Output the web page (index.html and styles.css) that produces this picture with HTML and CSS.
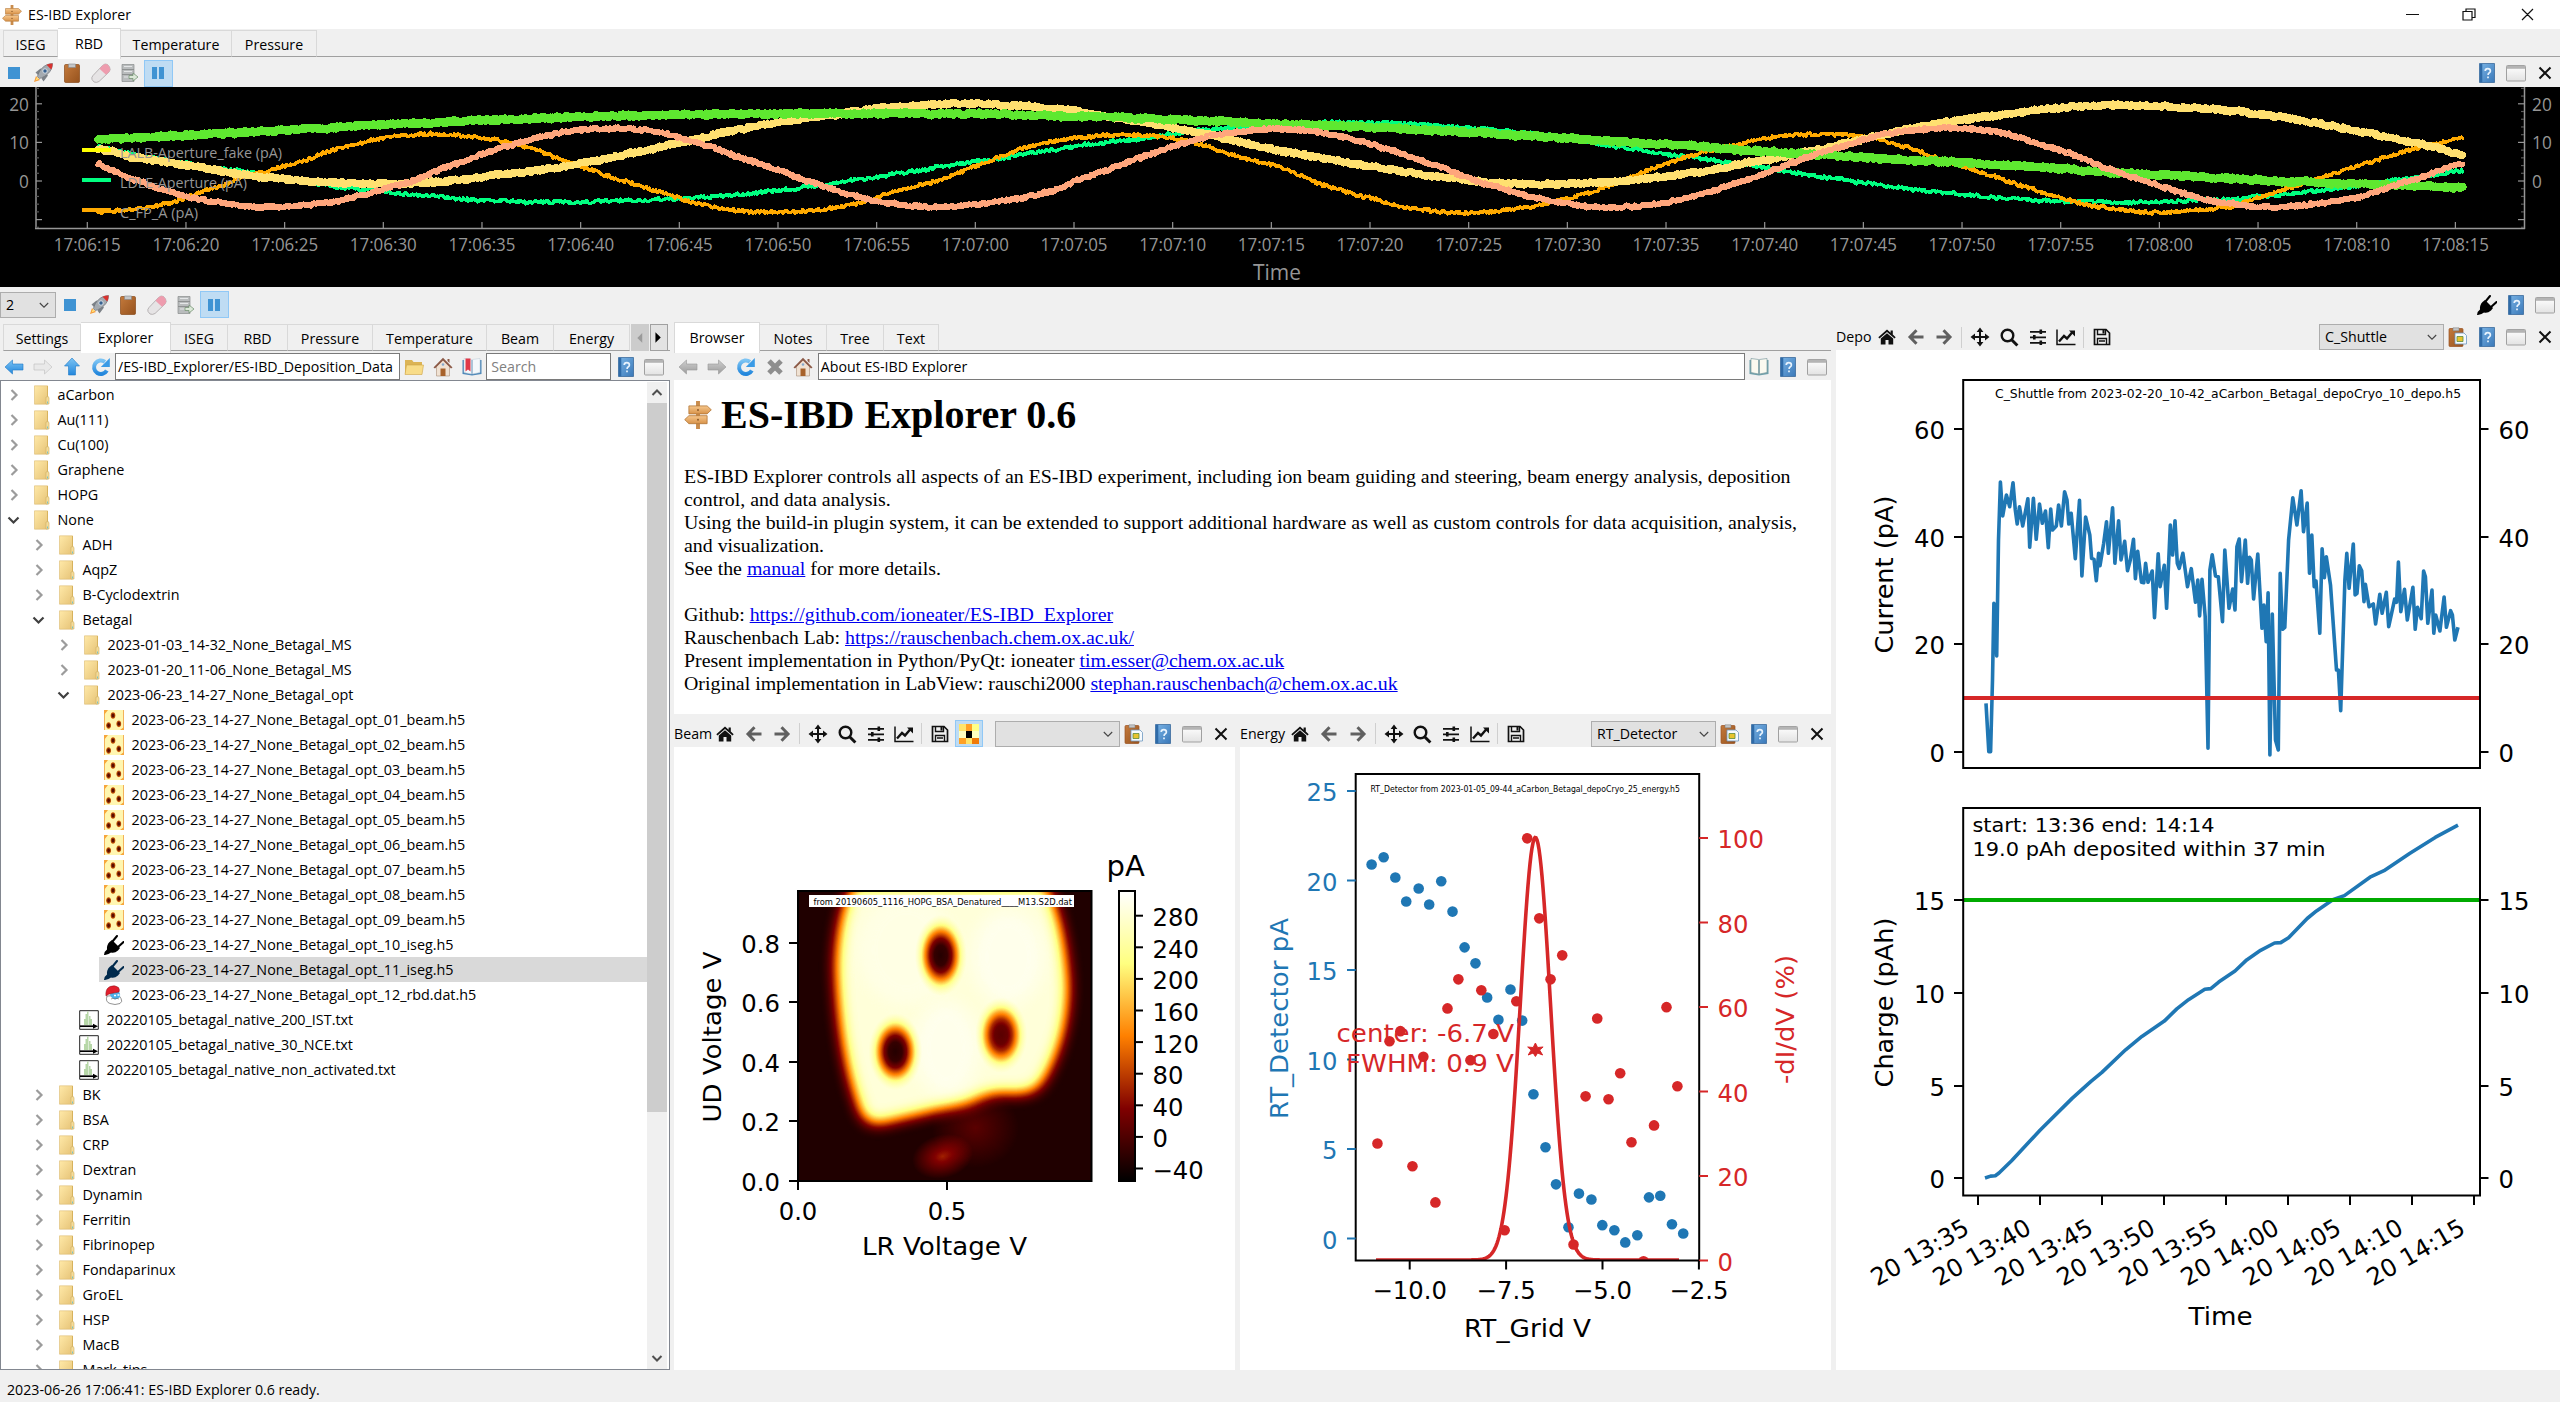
FILE: index.html
```html
<!DOCTYPE html>
<html lang="en">
<head>
<meta charset="utf-8">
<title>ES-IBD Explorer</title>
<link rel="stylesheet" href="styles.css">
</head>
<body>
<svg class="sprite" aria-hidden="true">
  <defs>
    <linearGradient id="gBlue" x1="0" y1="0" x2="0" y2="1"><stop offset="0" stop-color="#7cc4f4"/><stop offset="1" stop-color="#2387dc"/></linearGradient>
    <linearGradient id="gGrey" x1="0" y1="0" x2="0" y2="1"><stop offset="0" stop-color="#cfcfcf"/><stop offset="1" stop-color="#9c9c9c"/></linearGradient>
    <linearGradient id="gFolder" x1="0" y1="0" x2="1" y2="1"><stop offset="0" stop-color="#ffe9a8"/><stop offset="1" stop-color="#e6c377"/></linearGradient>
    <linearGradient id="gWood" x1="0" y1="0" x2="0" y2="1"><stop offset="0" stop-color="#f7c78c"/><stop offset="1" stop-color="#d8934a"/></linearGradient>
    <linearGradient id="gBook" x1="0" y1="0" x2="1" y2="1"><stop offset="0" stop-color="#7ab4e6"/><stop offset="1" stop-color="#3a78b8"/></linearGradient>
    <linearGradient id="gWin" x1="0" y1="0" x2="0" y2="1"><stop offset="0" stop-color="#fff"/><stop offset="1" stop-color="#e2e2e2"/></linearGradient>
    <linearGradient id="gClip" x1="0" y1="0" x2="1" y2="1"><stop offset="0" stop-color="#c47a3c"/><stop offset="1" stop-color="#96521d"/></linearGradient>
    <radialGradient id="gDot"><stop offset="0.3" stop-color="#5a0c00"/><stop offset="0.7" stop-color="#c85a10"/><stop offset="1" stop-color="#ffd860" stop-opacity="0"/></radialGradient>
  </defs>
  <symbol id="sign" viewBox="0 0 20 20"><path d="M8.6 0h2.800v20H8.600z" fill="#c98c4c"/><path d="M3.500 3.500h13l3 2.800-3 2.900h-13z" fill="url(#gWood)" stroke="#b57a3c" stroke-width=".6"/><path d="M16.500 10.500h-13l-3 2.800 3 2.900h13z" fill="url(#gWood)" stroke="#b57a3c" stroke-width=".6"/><circle cx="10" cy="6.400" r=".7" fill="#8d5a28"/><circle cx="10" cy="13.400" r=".7" fill="#8d5a28"/></symbol>
  <symbol id="stop" viewBox="0 0 20 20"><path d="M4 4h12v12H4z" fill="#3f93d3"/></symbol>
  <symbol id="pause" viewBox="0 0 20 20"><path d="M4 4h5v12H4zM11 4h5v12h-5z" fill="#3f93d3"/></symbol>
  <symbol id="rocket" viewBox="0 0 20 20"><path d="M1 19l2-6 4 4z" fill="#f59a3a"/><path d="M2.500 17.500l1.500-3.500 2 2z" fill="#ffe27a"/><path d="M2.500 9.500l5-4 4 3-5 5zM8.500 15.500l4-5 2.500 2-4.500 6z" fill="#7d8288"/><path d="M4.500 13.500C6 7 11 1 19.500.500c0 8-6.500 13-13 15z" fill="#a4aab0" stroke="#6d737a" stroke-width=".7"/><path d="M13.500 1.800c2-.9 4-1.300 6-1.300 0 2.500-.4 4.500-1.300 6z" fill="#d8322f"/><circle cx="12" cy="8" r="2.200" fill="#38618f" stroke="#e8edf2" stroke-width=".8"/></symbol>
  <symbol id="clip" viewBox="0 0 20 20"><rect x="2.500" y="1.500" width="15" height="18" rx="1.200" fill="url(#gClip)" stroke="#8a4a1a" stroke-width=".7"/><path d="M6.500 1h7v3.500h-7z" fill="#c4c6c8" stroke="#85878a" stroke-width=".6"/></symbol>
  <symbol id="eraser" viewBox="0 0 20 20"><path d="M2 12.500L11.500 2.500Q14 0 16.500 1.500l2 2.500q1.500 2.500-.5 5L8 18.500q-2.500 1.500-5 .5L1 16.500q-.8-2 1-4z" fill="#e6e4e5" stroke="#a9a4a6" stroke-width=".8"/><path d="M8.500 5.700L11.500 2.500Q14 0 16.500 1.500l2 2.500q1.500 2.500-.5 5l-3 2.800z" fill="#ee9cae"/></symbol>
  <symbol id="server" viewBox="0 0 20 20"><g fill="#b9bcbd" stroke="#8a8c8d" stroke-width=".7"><path d="M3 1.500h12v5H3zM3 6.500h12v5H3zM3 11.500h12v7H3z"/></g><path d="M5 3.500h8M5 8.500h8M5 14h5" stroke="#e4e6e7"/><path d="M10 12.500h4V10l5 4-5 4v-2.500h-4z" fill="#dbe8d8" stroke="#6c8d6a" stroke-width=".7"/></symbol>
  <symbol id="left" viewBox="0 0 20 20"><path d="M1 10l7.500-7v4H19v6H8.500v4z" stroke-width=".6" stroke-linejoin="round"/></symbol>
  <symbol id="right" viewBox="0 0 20 20"><path d="M19 10l-7.500-7v4H1v6h10.500v4z" stroke-width=".6" stroke-linejoin="round"/></symbol>
  <symbol id="up" viewBox="0 0 20 20"><path d="M10 1L2.500 9h4v9h7V9h4z" fill="url(#gBlue)" stroke="#1f7bc8" stroke-width=".6"/></symbol>
  <symbol id="reload" viewBox="0 0 20 20"><path d="M15.800 13.500A6.800 6.800 0 1 1 14 4.800" fill="none" stroke="url(#gBlue)" stroke-width="4"/><path d="M18.800 1v9H9.800z" fill="#3a9be6"/></symbol>
  <symbol id="folderopen" viewBox="0 0 20 20"><path d="M1 3h7l1.500 2H18v12H1z" fill="#dcb455"/><path d="M2.500 8H19.500L18 17.500H1z" fill="#f8dc88" stroke="#cfa548" stroke-width=".6"/></symbol>
  <symbol id="house" viewBox="0 0 20 20"><path d="M3.500 9.500L10 3l6.500 6.500V19h-13z" fill="#f0e2d3" stroke="#a98d77" stroke-width=".6"/><path d="M.5 10.500L10 .8l9.500 9.700-1.500 1L10 3.500l-8 8z" fill="#8c5a47"/><path d="M7.500 11.500h5V19h-5z" fill="#a8622a"/><circle cx="10" cy="7.500" r="1.300" fill="#86a9cc"/><path d="M14.500 2h2v4l-2-2z" fill="#8c5a47"/></symbol>
  <symbol id="bookmark" viewBox="0 0 20 20"><path d="M.5 3v14l9.500 1.500L19.500 17V3z" fill="#4d87b8"/><path d="M2 1.500l7.500 1V17L2 15.500zM18 1.500l-7.500 1V17l7.500-1.500z" fill="#f4f8fb" stroke="#b9c9d6" stroke-width=".5"/><path d="M3.500 1.500h5V14.500l-2.500-2-2.500 2z" fill="#e03848"/></symbol>
  <symbol id="openbook" viewBox="0 0 20 20"><path d="M.5 3v14l9.500 1.500L19.500 17V3z" fill="#6fa0aa"/><path d="M2 1.500l7.500 1V17L2 15.500zM18 1.500l-7.500 1V17l7.500-1.500z" fill="#fbfaf0" stroke="#7d9ba1" stroke-width=".7"/></symbol>
  <symbol id="help" viewBox="0 0 20 20"><path d="M2.500 .5h15v19h-15z" fill="url(#gBook)" stroke="#2c5f94" stroke-width=".7"/><path d="M2.800 .8h2.500v18.500H2.800z" fill="#2f6ba8"/><path d="M8.200 8q.1-2.400 2.600-2.400T13.400 8q0 1.300-1.300 2-1 .6-1 2M11 13.500v1.700" fill="none" stroke="#e8f3fd" stroke-width="1.700"/></symbol>
  <symbol id="window" viewBox="0 0 20 20"><rect x=".5" y="2.500" width="19" height="15.500" rx="1" fill="url(#gWin)" stroke="#a0a0a0"/><path d="M.8 2.800h18.400v3H.8z" fill="#b4b4b4"/></symbol>
  <symbol id="close" viewBox="0 0 20 20"><path d="M4.500 4.500l11 11M15.500 4.500l-11 11" stroke="#111" stroke-width="2"/></symbol>
  <symbol id="greyx" viewBox="0 0 20 20"><path d="M4 4l12 12M16 4L4 16" stroke="#8e8e8e" stroke-width="5"/></symbol>
  <symbol id="home" viewBox="0 0 20 20"><path d="M10 2.500L1.300 10.200l1.200 1.300L10 5l7.500 6.500 1.200-1.300-2.900-2.600V3.500h-2.200v2.200z" fill="#111"/><path d="M10 6.200L3.800 11.600V17.500h4.700v-4.500h3v4.500h4.700v-5.900z" fill="#111"/></symbol>
  <symbol id="mleft" viewBox="0 0 20 20"><path d="M17.500 10H4M10.500 3.300L4 10l6.500 6.700" fill="none" stroke="#606060" stroke-width="3"/></symbol>
  <symbol id="mright" viewBox="0 0 20 20"><path d="M2.500 10H16M9.500 3.300L16 10l-6.500 6.700" fill="none" stroke="#606060" stroke-width="3"/></symbol>
  <symbol id="move" viewBox="0 0 20 20"><path d="M10 2v16M2 10h16" stroke="#111" stroke-width="2"/><path d="M10 .500l3.400 4.500H6.600zM10 19.500l3.400-4.500H6.600zM.500 10l4.500-3.400v6.800zM19.500 10l-4.500-3.400v6.800z" fill="#111"/></symbol>
  <symbol id="lens" viewBox="0 0 20 20"><circle cx="8.500" cy="8.500" r="5.800" fill="none" stroke="#111" stroke-width="2.400"/><path d="M12.600 12.700l5.800 5.800" stroke="#111" stroke-width="3"/></symbol>
  <symbol id="sliders" viewBox="0 0 20 20"><path d="M2 4.800h16M2 10.300h16M2 15.800h16" stroke="#111" stroke-width="1.700"/><path d="M11.500 2.500h2.600v4.600h-2.600zM5 8h2.600v4.600H5zM11.500 13.500h2.600v4.600h-2.600z" fill="#111"/></symbol>
  <symbol id="trend" viewBox="0 0 20 20"><path d="M1 2.500v15h18.500" fill="none" stroke="#111" stroke-width="1.500"/><path d="M3 14.500l5-5.500 3 2.500 5.500-6.500" fill="none" stroke="#111" stroke-width="2.400"/><path d="M13 3.500h6v6z" fill="#111"/></symbol>
  <symbol id="save" viewBox="0 0 20 20"><path d="M2.500 2.500h11.500L17.500 6V17.500h-15z" fill="none" stroke="#111" stroke-width="1.700"/><path d="M5.500 2.500v5h8v-5M5.500 17.500v-6h9v6M7 14h6" fill="none" stroke="#111" stroke-width="1.400"/><path d="M10.500 3h2v3.500h-2z" fill="#111"/></symbol>
  <symbol id="pixels" viewBox="0 0 20 20"><path d="M0 0h7v7H0z" fill="#ffe46a"/><path d="M7 0h6v7H7z" fill="#ffa126"/><path d="M13 0h7v7h-7z" fill="#ffff86"/><path d="M0 7h7v7H0zM13 7h7v7h-7z" fill="#ffffc0"/><path d="M7 7h6v7H7z"/><path d="M0 14h7v6H0z" fill="#ffa126"/><path d="M7 14h6v6H7z" fill="#ffe46a"/><path d="M13 14h7v6h-7z" fill="#f07a08"/></symbol>
  <symbol id="paste" viewBox="0 0 20 20"><rect x="1" y="1.500" width="14" height="18" rx="1" fill="url(#gClip)" stroke="#9a5020" stroke-width=".7"/><path d="M5 .8h6v3H5z" fill="#c4c6c8" stroke="#777" stroke-width=".5"/><path d="M7 6h9l2.500 2.500V17H7z" fill="#f6fafd" stroke="#6c98c0" stroke-width=".8"/><path d="M9 9.500h6v5H9z" fill="#e8c42e" stroke="#5d8a3a" stroke-width=".8"/></symbol>
  <symbol id="plug" viewBox="0 0 20 20"><path d="M0 20q.5-4 3-5.500-.5-4.500 2.500-7.500l2.500-2 8 8-2 2.500q-3.500 3-7 2Q5 19 1 20z"/><path d="M8.500 6.500l4.500-5.500M14 12l5.500-5" stroke="currentColor" stroke-width="2" stroke-linecap="round"/></symbol>
  <symbol id="folder" viewBox="0 0 16 20"><path d="M.5.800h13v18.400H.5z" fill="url(#gFolder)" stroke="#dcbb70" stroke-width=".6"/><path d="M13.500 1v17" stroke="#d7b25c" stroke-width="1"/><path d="M12 12q3-1.500 3 1v6h-3z" fill="#f5dc9a" stroke="#cfae62" stroke-width=".6"/><path d="M13.500 16.500v2" stroke="#79c3c4"/></symbol>
  <symbol id="beamfile" viewBox="0 0 20 20"><path d="M0 0h20v20H0z" fill="#fff6b0"/><path d="M0 0h1v20H0zM19 0h1v20h-1z" fill="#f3b25a"/><path d="M0 0h4L0 5zM16 20h4v-3z" fill="#f7a63c"/><ellipse cx="9" cy="5.500" rx="3" ry="4" fill="url(#gDot)"/><ellipse cx="4.600" cy="15.500" rx="3" ry="4" fill="url(#gDot)"/><ellipse cx="14.800" cy="13.800" rx="3" ry="4" fill="url(#gDot)"/></symbol>
  <symbol id="smurf" viewBox="0 0 20 20"><path d="M3 11Q1 17 6 18.500q5 2 10 0 3-2 1-5l-2-3z" fill="#fff" stroke="#666" stroke-width=".7"/><path d="M6 8.500l9-2q2 3 1 5.500-3 3-6 2-4-2-4-5.500z" fill="#4fb0e8"/><path d="M7 14q2-1.500 4 0 2-1.500 4 0" fill="none" stroke="#666" stroke-width=".6"/><path d="M2 11Q1 4 6 1.500q5-2 8.500 1 1.500 2.500.5 4.500L7 8.500Q4 9 2 11z" fill="#e21f2c" stroke="#8b1018" stroke-width=".5"/><path d="M10 10.500h2M13.500 10h2" stroke="#fff" stroke-width="1.700"/></symbol>
  <symbol id="msfile" viewBox="0 0 20 20"><path d="M.7.700h18.600v18.600H.7z" fill="#fff" stroke="#222"/><path d="M5 15V9h1.500V4H8V1.500h1.500V15zM10 15V6h1.500v3H13v6z" fill="#b7d7a8"/><path d="M1 16.200h14" stroke="#000" stroke-width="1.700"/><path d="M14 13.700l5 2.500-5 2.500z"/></symbol>
  <symbol id="chev" viewBox="0 0 20 20"><path d="M7.500 5l5 5-5 5" fill="none" stroke="#9c9c9c" stroke-width="2.200"/></symbol>
  <symbol id="chevdown" viewBox="0 0 20 20"><path d="M4.500 7.500l5 5 5-5" fill="none" stroke="#404040" stroke-width="2.200"/></symbol>
  <symbol id="caret" viewBox="0 0 10 10"><path d="M.8 3l4.200 4.200L9.200 3" fill="none" stroke="#444" stroke-width="1.100"/></symbol>
</svg>

<header class="titlebar">
  <svg class="ic"><use href="#sign"/></svg><span>ES-IBD Explorer</span>
  <svg class="winctl" viewBox="0 0 150 29"><path d="M6 14.500h13M63 11.500h9v8.500h-9zM66 11.500V9h9v8.500h-3M122 9l11 11M133 9l-11 11" fill="none" stroke="#111" stroke-width="1.200"/></svg>
</header>

<section class="live">
  <nav class="tabs livetabs"><span class="w54">ISEG</span><span class="on w62">RBD</span><span class="w111">Temperature</span><span class="w85">Pressure</span></nav>
  <div class="toolbar livebar">
    <i><svg class="ic"><use href="#stop"/></svg></i><i><svg class="ic"><use href="#rocket"/></svg></i><i><svg class="ic"><use href="#clip"/></svg></i><i><svg class="ic"><use href="#eraser"/></svg></i><i><svg class="ic"><use href="#server"/></svg></i><i class="lit"><svg class="ic"><use href="#pause"/></svg></i>
    <b class="grow"></b>
    <i><svg class="ic"><use href="#help"/></svg></i><i><svg class="ic"><use href="#window"/></svg></i><i><svg class="ic"><use href="#close"/></svg></i>
  </div>
  <svg id="live" class="liveplot" viewBox="0 87 2560 200"></svg>
</section>

<div class="toolbar mainbar">
  <div class="combo small">2<svg><use href="#caret"/></svg></div>
  <i><svg class="ic"><use href="#stop"/></svg></i><i><svg class="ic"><use href="#rocket"/></svg></i><i><svg class="ic"><use href="#clip"/></svg></i><i><svg class="ic"><use href="#eraser"/></svg></i><i><svg class="ic"><use href="#server"/></svg></i><i class="lit"><svg class="ic"><use href="#pause"/></svg></i>
  <b class="grow"></b>
  <i><svg class="ic"><use href="#plug"/></svg></i><i><svg class="ic"><use href="#help"/></svg></i><i><svg class="ic"><use href="#window"/></svg></i>
</div>

<main>
  <section class="explorer">
    <nav class="tabs"><span class="w78">Settings</span><span class="on w90">Explorer</span><span class="w57">ISEG</span><span class="w60">RBD</span><span class="w85">Pressure</span><span class="w114">Temperature</span><span class="w67">Beam</span><span class="w76">Energy</span><em class="scroll off"><svg viewBox="0 0 18 26"><path d="M11.500 8v11L6 13.500z" fill="#9a9a9a"/></svg></em><em class="scroll"><svg viewBox="0 0 18 26"><path d="M5 7v12l6-6z"/></svg></em></nav>
    <div class="toolbar">
      <i><svg class="ic blue"><use href="#left"/></svg></i><i><svg class="ic pale"><use href="#right"/></svg></i><i><svg class="ic"><use href="#up"/></svg></i><i><svg class="ic"><use href="#reload"/></svg></i>
      <div class="field path">/ES-IBD_Explorer/ES-IBD_Deposition_Data</div>
      <i><svg class="ic"><use href="#folderopen"/></svg></i><i><svg class="ic"><use href="#house"/></svg></i><i><svg class="ic"><use href="#bookmark"/></svg></i>
      <div class="field search">Search</div>
      <i><svg class="ic"><use href="#help"/></svg></i><i><svg class="ic"><use href="#window"/></svg></i>
    </div>
    <div class="treebox">
      <div id="tree" class="tree"></div>
      <div class="vscroll"><svg viewBox="0 0 20 20"><path d="M5.500 12.500L10 8l4.500 4.500" fill="none" stroke="#505050" stroke-width="2"/></svg><div class="thumb"></div><svg viewBox="0 0 20 20"><path d="M5.500 7.500L10 12l4.500-4.500" fill="none" stroke="#505050" stroke-width="2"/></svg></div>
    </div>
  </section>

  <section class="center">
    <nav class="tabs"><span class="on w86">Browser</span><span class="w67">Notes</span><span class="w57">Tree</span><span class="w55">Text</span></nav>
    <div class="toolbar">
      <i><svg class="ic grey"><use href="#left"/></svg></i><i><svg class="ic grey"><use href="#right"/></svg></i><i><svg class="ic"><use href="#reload"/></svg></i><i><svg class="ic"><use href="#greyx"/></svg></i><i><svg class="ic"><use href="#house"/></svg></i>
      <div class="field grow">About ES-IBD Explorer</div>
      <i><svg class="ic"><use href="#openbook"/></svg></i><i><svg class="ic"><use href="#help"/></svg></i><i><svg class="ic"><use href="#window"/></svg></i>
    </div>
    <article class="about">
      <h1><svg><use href="#sign"/></svg>ES-IBD Explorer 0.6</h1>
      <p>ES-IBD Explorer controls all aspects of an ES-IBD experiment, including ion beam guiding and steering, beam energy analysis, deposition<br>control, and data analysis.<br>Using the build-in plugin system, it can be extended to support additional hardware as well as custom controls for data acquisition, analysis,<br>and visualization.<br>See the <a>manual</a> for more details.</p>
      <p>Github: <a>https://github.com/ioneater/ES-IBD_Explorer</a><br>Rauschenbach Lab: <a>https://rauschenbach.chem.ox.ac.uk/</a><br>Present implementation in Python/PyQt: ioneater <a>tim.esser@chem.ox.ac.uk</a><br>Original implementation in LabView: rauschi2000 <a>stephan.rauschenbach@chem.ox.ac.uk</a></p>
    </article>
    <div class="plots">
      <section class="beam">
        <div class="toolbar">
          <label class="w37">Beam</label>
          <i><svg class="ic"><use href="#home"/></svg></i><i><svg class="ic"><use href="#mleft"/></svg></i><i><svg class="ic"><use href="#mright"/></svg></i><s></s><i><svg class="ic"><use href="#move"/></svg></i><i><svg class="ic"><use href="#lens"/></svg></i><i><svg class="ic"><use href="#sliders"/></svg></i><i><svg class="ic"><use href="#trend"/></svg></i><s></s><i><svg class="ic"><use href="#save"/></svg></i><i class="lit"><svg class="ic"><use href="#pixels"/></svg></i>
          <b class="grow"></b>
          <div class="combo"><svg><use href="#caret"/></svg></div>
          <i><svg class="ic"><use href="#paste"/></svg></i><i><svg class="ic"><use href="#help"/></svg></i><i><svg class="ic"><use href="#window"/></svg></i><i><svg class="ic"><use href="#close"/></svg></i>
        </div>
        <svg id="beam" class="plot" viewBox="674 747 561 623">
          <defs>
            <filter id="afmhot" x="0" y="0" width="1" height="1" color-interpolation-filters="sRGB"><feComponentTransfer><feFuncR type="table" tableValues="0 .5 1 1 1"/><feFuncG type="table" tableValues="0 0 .5 1 1"/><feFuncB type="table" tableValues="0 0 0 .5 1"/></feComponentTransfer></filter>
            <filter id="soft" x="-.3" y="-.3" width="1.600" height="1.600" color-interpolation-filters="sRGB"><feGaussianBlur stdDeviation="21"/></filter>
            <radialGradient id="hole"><stop offset="0" stop-color="#121212"/><stop offset=".25" stop-color="#141414" stop-opacity=".97"/><stop offset=".42" stop-color="#1a1a1a" stop-opacity=".82"/><stop offset=".62" stop-color="#222" stop-opacity=".48"/><stop offset=".8" stop-color="#555" stop-opacity=".2"/><stop offset="1" stop-color="#999" stop-opacity="0"/></radialGradient>
            <radialGradient id="smear"><stop offset="0" stop-color="#fff" stop-opacity=".27"/><stop offset="1" stop-color="#fff" stop-opacity="0"/></radialGradient>
            <linearGradient id="bar" x1="0" y1="1" x2="0" y2="0"><stop offset="0" stop-color="#000"/><stop offset=".25" stop-color="#800000"/><stop offset=".5" stop-color="#ff8000"/><stop offset=".75" stop-color="#ffff80"/><stop offset="1" stop-color="#fff"/></linearGradient>
            <clipPath id="frame"><path d="M351 496h810v800H351z"/></clipPath>
          </defs>
          <g transform="translate(670 710) scale(.3635)"><g clip-path="url(#frame)"><g filter="url(#afmhot)">
            <path d="M351 496h810v800H351z" fill="#101010"/>
            <path filter="url(#soft)" d="M505 484C474 540 460 620 458 710c4 140 24 270 58 368 12 42 25 62 62 58 50-10 130-32 240-54 40-20 65-31 100-30 55 3 84 8 112-40C1076 930 1096 840 1094 750 1088 640 1066 550 1034 484z" fill="#ececec"/>
            <ellipse cx="650" cy="660" rx="130" ry="150" fill="#fff" opacity=".35" filter="url(#soft)"/>
            <ellipse cx="930" cy="680" rx="100" ry="130" fill="#fff" opacity=".5" filter="url(#soft)"/>
            <ellipse cx="760" cy="930" rx="90" ry="130" fill="#fff" opacity=".5" filter="url(#soft)"/>
            <ellipse cx="745" cy="675" rx="72" ry="112" fill="url(#hole)"/>
            <ellipse cx="620" cy="940" rx="74" ry="106" fill="url(#hole)"/>
            <ellipse cx="911" cy="894" rx="72" ry="104" fill="url(#hole)" opacity=".88"/>
            <ellipse cx="840" cy="1150" rx="120" ry="110" fill="url(#smear)" opacity=".45"/>
            <ellipse cx="750" cy="1228" rx="85" ry="60" fill="url(#smear)" transform="rotate(-14 750 1228)"/>
          </g></g></g>
        </svg>
      </section>
      <section class="energy">
        <div class="toolbar">
          <label class="w46">Energy</label>
          <i><svg class="ic"><use href="#home"/></svg></i><i><svg class="ic"><use href="#mleft"/></svg></i><i><svg class="ic"><use href="#mright"/></svg></i><s></s><i><svg class="ic"><use href="#move"/></svg></i><i><svg class="ic"><use href="#lens"/></svg></i><i><svg class="ic"><use href="#sliders"/></svg></i><i><svg class="ic"><use href="#trend"/></svg></i><s></s><i><svg class="ic"><use href="#save"/></svg></i>
          <b class="grow"></b>
          <div class="combo">RT_Detector<svg><use href="#caret"/></svg></div>
          <i><svg class="ic"><use href="#paste"/></svg></i><i><svg class="ic"><use href="#help"/></svg></i><i><svg class="ic"><use href="#window"/></svg></i><i><svg class="ic"><use href="#close"/></svg></i>
        </div>
        <svg id="energy" class="plot" viewBox="1240 747 591 623"></svg>
      </section>
    </div>
  </section>

  <section class="depo">
    <div class="toolbar">
      <label class="w37">Depo</label>
      <i><svg class="ic"><use href="#home"/></svg></i><i><svg class="ic"><use href="#mleft"/></svg></i><i><svg class="ic"><use href="#mright"/></svg></i><s></s><i><svg class="ic"><use href="#move"/></svg></i><i><svg class="ic"><use href="#lens"/></svg></i><i><svg class="ic"><use href="#sliders"/></svg></i><i><svg class="ic"><use href="#trend"/></svg></i><s></s><i><svg class="ic"><use href="#save"/></svg></i>
      <b class="grow"></b>
      <div class="combo">C_Shuttle<svg><use href="#caret"/></svg></div>
      <i><svg class="ic"><use href="#paste"/></svg></i><i><svg class="ic"><use href="#help"/></svg></i><i><svg class="ic"><use href="#window"/></svg></i><i><svg class="ic"><use href="#close"/></svg></i>
    </div>
    <svg id="depo" class="plot" viewBox="1836 350 724 1020"></svg>
  </section>
</main>
<footer>2023-06-26 17:06:41: ES-IBD Explorer 0.6 ready.</footer>
<script src="app.js"></script>
</body>
</html>
```
FILE: styles.css
```css
* { box-sizing: border-box; }
body {
  margin: 0; width: 2560px; height: 1402px; overflow: hidden;
  display: flex; flex-direction: column;
  background: #f0f0f0; color: #000;
  font: 14.2px/20px "Open Sans", "Noto Sans", sans-serif;
}
.sprite { width: 0; height: 0; position: absolute; }
svg { display: block; flex: none; }
.ic { width: 20px; height: 20px; color: #000; }
.blue { fill: url(#gBlue); stroke: #1f7bc8; }
.grey { fill: url(#gGrey); stroke: #979797; }
.pale { fill: #e9e9e9; stroke: #bdbdbd; }
.grow { flex: 1; }

.titlebar { height: 29px; background: #fff; display: flex; align-items: center; padding-left: 2px; gap: 6px; flex: none; }
.titlebar .winctl { width: 150px; height: 29px; margin: 0 10px 0 auto; }

.tabs { height: 31px; display: flex; align-items: flex-end; padding-bottom: 2px; flex: none; }
.tabs::before { content: ""; flex: none; width: 3px; }
.tabs::after { content: ""; flex: 1; height: 1px; background: #a0a0a0; }
.tabs span {
  height: 27px; line-height: 28px; text-align: center; flex: none; white-space: nowrap;
  border: 1px solid #d9d9d9; border-left: 0; border-bottom-color: #a0a0a0;
}
.tabs span:first-child { border-left: 1px solid #d9d9d9; }
.tabs .on { height: 31px; line-height: 30px; background: #fff; border-color: #d9d9d9; border-bottom: 0; margin-bottom: -2px; }
.livetabs { height: 30px; }
.scroll { width: 18px; height: 27px; margin-left: 1px; border: 1px solid #a0a0a0; background: #e3e3e3; flex: none; }
.scroll.off { background: #cccccc; border-color: #cccccc; }
.scroll svg { width: 16px; height: 25px; }
.center .tabs::before { width: 0; }
.w54 { width: 55px; } .w62 { width: 63px; } .w111 { width: 111px; } .w85 { width: 85px; }
.w78 { width: 78px; } .w90 { width: 90px; } .w57 { width: 57px; } .w60 { width: 60px; }
.w114 { width: 114px; } .w67 { width: 67px; } .w76 { width: 76px; } .w86 { width: 86px; }
.w55 { width: 55px; } .w37 { width: 36.500px; } .w46 { width: 46px; }

.toolbar { height: 27px; display: flex; align-items: center; flex: none; }
.toolbar i { width: 28.750px; height: 27px; display: flex; align-items: center; justify-content: center; flex: none; }
.toolbar .lit { background: #bfdcf3; border: 1px solid #90c8f6; }
.toolbar s { width: 1px; height: 21px; background: #cfcfcf; margin: 0 3.500px 0 2.500px; }
.livebar { height: 28px; padding-right: 1px; }
.liveplot { width: 2560px; height: 200px; background: #000; }
.mainbar { height: 35px; padding-right: 1px; }
.combo {
  width: 125px; height: 26px; border: 1px solid #adadad; background: #e1e1e1;
  display: flex; align-items: center; padding: 0 6px 0 5px; flex: none;
}
.combo svg { width: 10px; height: 10px; margin-left: auto; }
.combo.small { width: 56px; }
.field { height: 27px; border: 1px solid #7a7a7a; background: #fff; line-height: 26px; padding-left: 2px; white-space: nowrap; overflow: hidden; }
.path { width: 285px; }
.search { width: 125px; color: #808080; padding-left: 4px; }

main { flex: 1; display: grid; grid-template-columns: 670px 1158px 724px; column-gap: 4px; min-height: 0; }
.explorer, .center, .depo { display: flex; flex-direction: column; min-height: 0; min-width: 0; }
.center { padding-right: 1px; }
.treebox { flex: 1; min-height: 0; border: 1px solid #828790; background: #fff; display: flex; padding: 1px 2px 0 0; overflow: hidden; }
.tree { flex: 1; overflow: hidden; }
.row { height: 25px; display: flex; align-items: center; line-height: 25px; white-space: nowrap; font-size: 14.350px; }
.row .ic { width: 20px; }
.row .chev { width: 20px; height: 20px; margin-left: 3px; }
.row .fold { width: 16px; height: 20px; margin: 0 8px 0 9.500px; }
.row .file { margin: 0 8px 0 4.500px; }
.row .cell { flex: 1; display: flex; align-items: center; height: 25px; }
.row .sel { background: #d9d9d9; }
.row .sel .ic { color: #002a4d; fill: #002a4d; }
.vscroll { width: 20px; background: #f0f0f0; display: flex; flex-direction: column; }
.vscroll svg { width: 20px; height: 21px; }
.thumb { height: 709px; background: #cdcdcd; margin-bottom: auto; }

.about { height: 334px; background: #fff; padding-left: 10px; flex: none; font: 19.880px/23px "Liberation Serif", "Times New Roman", serif; }
.about h1 { margin: 11px 0 25.500px; font-size: 40px; line-height: 48px; display: flex; align-items: center; white-space: nowrap; }
.about h1 svg { width: 28px; height: 28px; margin: 0 9px 0 0; }
.about p { margin: 0 0 23px; white-space: nowrap; }
.about a { color: #0000ee; text-decoration: underline; }
.plots { flex: 1; display: flex; gap: 5px; }
.beam { width: 561px; }
.energy { width: 591px; }
.plots .toolbar { height: 33px; padding-top: 6px; }
.depo .toolbar { height: 28px; padding: 2px 1px 0 0; }
.plot { background: #fff; width: 100%; }
.beam .plot, .energy .plot { height: 623px; }
.depo .plot { height: 1020px; }
.plot text { font-family: "DejaVu Sans", sans-serif; font-size: 24.300px; }
footer { height: 32px; padding: 10px 0 0 7px; flex: none; }
```
FILE: app.js
```js
const NS = 'http://www.w3.org/2000/svg';
function add(host, tag, attrs, content) {
  const n = document.createElementNS(NS, tag);
  for (const k in attrs) n.setAttribute(k, attrs[k]);
  if (content !== undefined) n.textContent = content;
  host.appendChild(n);
  return n;
}
function label(host, s, x, y, o = {}) {
  const a = { x, y, fill: o.fill || '#000', 'text-anchor': o.anchor || 'start' };
  if (o.len) { a.textLength = o.len; a.lengthAdjust = 'spacingAndGlyphs'; }
  if (o.rot) a.transform = `rotate(${o.rot} ${x} ${y})`;
  const t = add(host, 'text', a, s);
  if (o.size) t.style.fontSize = o.size + 'px';
  return t;
}
function line(host, x1, y1, x2, y2, color = '#000', w = 2) {
  add(host, 'path', { d: `M${x1} ${y1}L${x2} ${y2}`, stroke: color, 'stroke-width': w });
}
const pts = s => s.trim().split(/\s+/).map(p => p.split(',').map(Number));
const scaled = (s, ox, sx, oy, sy) => pts(s).map(([x, y]) => [ox + x / sx, oy + y / sy]);
const poly = a => a.map(p => p[0].toFixed(1) + ',' + p[1].toFixed(1)).join(' ');

/* ---- file tree ---- */
const tree = document.getElementById('tree');
const rows = [
  ...['aCarbon', 'Au(111)', 'Cu(100)', 'Graphene', 'HOPG'].map(n => [0, n, 'c']), [0, 'None', 'o'],
  [1, 'ADH', 'c'], [1, 'AqpZ', 'c'], [1, 'B-Cyclodextrin', 'c'], [1, 'Betagal', 'o'],
  [2, '2023-01-03_14-32_None_Betagal_MS', 'c'], [2, '2023-01-20_11-06_None_Betagal_MS', 'c'], [2, '2023-06-23_14-27_None_Betagal_opt', 'o'],
  ...[1, 2, 3, 4, 5, 6, 7, 8, 9].map(i => [3, `2023-06-23_14-27_None_Betagal_opt_0${i}_beam.h5`, 'beamfile']),
  [3, '2023-06-23_14-27_None_Betagal_opt_10_iseg.h5', 'plug'],
  [3, '2023-06-23_14-27_None_Betagal_opt_11_iseg.h5', 'plug', 1],
  [3, '2023-06-23_14-27_None_Betagal_opt_12_rbd.dat.h5', 'smurf'],
  [2, '20220105_betagal_native_200_IST.txt', 'msfile'], [2, '20220105_betagal_native_30_NCE.txt', 'msfile'], [2, '20220105_betagal_native_non_activated.txt', 'msfile'],
  ...['BK', 'BSA', 'CRP', 'Dextran', 'Dynamin', 'Ferritin', 'Fibrinopep', 'Fondaparinux', 'GroEL', 'HSP', 'MacB', 'Mark_tips'].map(n => [1, n, 'c'])
];
tree.innerHTML = rows.map(([lvl, name, kind, sel]) => {
  const dir = kind === 'c' || kind === 'o';
  const chev = dir ? `<svg class="chev"><use href="#${kind === 'c' ? 'chev' : 'chevdown'}"/></svg>` : '<svg class="chev"></svg>';
  const icon = dir ? '<svg class="fold"><use href="#folder"/></svg>' : `<svg class="ic file"><use href="#${kind}"/></svg>`;
  return `<div class="row" style="padding-left:${lvl * 25}px">${chev}<div class="cell${sel ? ' sel' : ''}">${icon}${name}</div></div>`;
}).join('');

/* ---- live current plot ---- */
const live = document.getElementById('live');
const G = '#969696';
line(live, 36, 87, 36, 229, G, 1.5);
line(live, 35, 228.500, 2525, 228.500, G, 1.5);
line(live, 2524.500, 87, 2524.500, 229, G, 1.5);
for (let v = -12; v <= 24; v += 2) {
  const y = 181 - v * 3.86, m = v % 10 === 0;
  if (y > 228) continue;
  line(live, 36, y, m ? 42 : 39, y, m ? G : '#5a5a5a', 1.2);
  line(live, 2524, y, m ? 2518 : 2521, y, m ? G : '#5a5a5a', 1.2);
}
[[20, 110.5], [10, 149], [0, 187.500]].forEach(([v, y]) => {
  label(live, v, 29, y, { anchor: 'end', fill: G, size: 17.300 });
  label(live, v, 2532, y, { fill: G, size: 17.300 });
});
for (let i = 0; i <= 24; i++) {
  const x = 87.300 + i * 98.670, s = 375 + i * 5;
  line(live, x, 222, x, 228, G, 1.2);
  label(live, `17:${String(6 + Math.floor((s - 360) / 60)).padStart(2, '0')}:${String(s % 60).padStart(2, '0')}`, x, 251, { anchor: 'middle', fill: G, size: 17.300, len: 67 });
}
label(live, 'Time', 1277, 280, { anchor: 'middle', fill: G, size: 21, len: 48 });
let seed = 7;
const rnd = () => (seed = (seed * 16807) % 2147483647) / 2147483647;
function curve(color, w, noise, a, b) {
  const p = scaled(a, 0, 1.225, 0, 3).concat(scaled(b, 1280, 1.225, 0, 3).slice(1));
  const out = [];
  let k = 0, drift = 0;
  for (let x = p[0][0]; x <= p[p.length - 1][0]; x += 1.3) {
    while (k < p.length - 2 && p[k + 1][0] < x) k++;
    const p0 = p[Math.max(0, k - 1)], p1 = p[k], p2 = p[k + 1], p3 = p[Math.min(p.length - 1, k + 2)];
    const h = p2[0] - p1[0], t = (x - p1[0]) / h;
    const m1 = (p2[1] - p0[1]) / (p2[0] - p0[0]) * h, m2 = (p3[1] - p1[1]) / (p3[0] - p1[0]) * h;
    const t2 = t * t, t3 = t2 * t;
    const y = (2 * t3 - 3 * t2 + 1) * p1[1] + (t3 - 2 * t2 + t) * m1 + (3 * t2 - 2 * t3) * p2[1] + (t3 - t2) * m2;
    drift = drift * .8 + (rnd() - .5) * .8;
    out.push([x, y + drift + (rnd() - .5) * noise]);
  }
  add(live, 'polyline', { points: poly(out), fill: 'none', stroke: color, 'stroke-width': w, 'stroke-linejoin': 'round', 'stroke-linecap': 'round', 'shape-rendering': 'crispEdges' });
}
curve('#00ff80', 3.400, 3, '120,440 200,480 290,512 400,555 480,577 560,595 640,605 700,606 780,602 860,592 940,575 1000,557 1100,520 1180,490 1260,462 1330,435 1400,415 1470,390 1568,375',
  '0,372 60,368 130,370 200,378 260,390 330,407 400,434 470,460 540,485 600,507 680,535 750,560 820,580 900,597 980,605 1060,607 1140,600 1220,585 1300,563 1370,540 1420,523 1450,510');
curve('#ffaa00', 3.400, 3, '120,635 160,630 210,607 260,565 310,525 360,490 400,457 450,425 490,409 540,403 590,413 640,437 690,480 740,524 790,562 840,600 890,628 950,637 1000,630 1050,611 1100,572 1150,540 1200,495 1250,448 1300,420 1360,405 1420,408 1470,432 1510,465 1568,502',
  '0,502 50,552 110,595 160,625 220,638 280,630 340,603 400,560 450,512 500,470 560,433 610,410 660,403 710,410 760,435 800,470 850,510 900,550 950,590 1000,620 1060,637 1100,636 1160,620 1220,577 1290,522 1350,475 1400,440 1450,411');
curve('#ffe070', 7, 2.5, '120,445 160,470 220,492 300,523 350,537 400,547 450,551 500,551 550,542 600,528 700,497 760,467 830,430 900,392 960,365 1020,345 1070,326 1120,317 1180,311 1240,316 1300,328 1360,350 1430,380 1500,415 1568,452',
  '0,452 60,478 130,507 200,532 260,548 320,552 380,549 440,538 500,520 560,495 620,468 680,438 740,403 800,374 860,352 920,332 980,320 1040,316 1100,322 1160,332 1220,348 1280,374 1340,404 1400,435 1450,465');
curve('#5ee830', 7.800, 2.5, '120,420 300,397 470,375 650,355 830,344 950,341 1100,341 1200,343 1300,348 1400,355 1500,365 1568,372',
  '0,372 100,380 200,392 300,407 400,422 500,438 600,455 700,470 800,485 900,497 1000,514 1100,527 1200,540 1300,550 1400,558 1450,562');
curve('#ffa67c', 5.500, 2.5, '120,492 150,525 200,568 250,602 300,617 340,622 400,608 450,580 500,545 550,500 600,455 650,418 700,393 745,385 800,393 850,425 900,465 950,508 1000,552 1050,590 1100,613 1160,620 1220,606 1280,578 1330,532 1380,488 1430,445 1480,410 1540,388 1568,387',
  '0,387 50,398 100,425 150,463 200,507 250,550 300,585 350,612 400,622 450,615 500,593 550,557 600,515 650,468 700,430 750,398 800,387 820,385 880,397 930,432 980,473 1030,520 1080,560 1130,596 1180,616 1220,622 1270,612 1320,590 1370,553 1410,520 1450,488');
[['#ffff00', 150, 'LALB-Aperture_fake (pA)', 162], ['#00ff80', 180, 'LDLE-Aperture (pA)', 127], ['#ffaa00', 210, 'C_FP_A (pA)', 78]].forEach(([c, y, s, w]) => {
  line(live, 82, y, 111, y, c, 4);
  label(live, s, 120, y + 7.500, { fill: G, size: 14.400, len: w });
});

function box(host, x, y, x2, y2) {
  add(host, 'rect', { x, y, width: x2 - x, height: y2 - y, fill: 'none', stroke: '#000', 'stroke-width': 2 });
}

/* ---- beam plot ---- */
const beam = document.getElementById('beam');
box(beam, 798, 891, 1091.500, 1181);
add(beam, 'rect', { x: 809, y: 895, width: 265, height: 12, fill: '#fff' });
label(beam, 'from 20190605_1116_HOPG_BSA_Denatured____M13.S2D.dat', 813.5, 904.500, { size: 8.700, len: 258.500 });
[['0.8', 943], ['0.6', 1002], ['0.4', 1062], ['0.2', 1121], ['0.0', 1181]].forEach(([s, y]) => {
  line(beam, 789, y, 798, y); label(beam, s, 780, y + 10.200, { anchor: 'end' });
});
[['0.0', 798], ['0.5', 947]].forEach(([s, x]) => { line(beam, x, 1181, x, 1190); label(beam, s, x, 1219.500, { anchor: 'middle' }); });
label(beam, 'LR Voltage V', 944.500, 1255, { anchor: 'middle', len: 165 });
label(beam, 'UD Voltage V', 721, 1037, { anchor: 'middle', len: 171, rot: -90 });
label(beam, 'pA', 1106.500, 876, { size: 29 });
add(beam, 'rect', { x: 1119, y: 891, width: 16, height: 290, fill: 'url(#bar)', stroke: '#000', 'stroke-width': 2 });
[280, 240, 200, 160, 120, 80, 40, 0].forEach((v, i) => {
  const y = 915.700 + i * 31.600; line(beam, 1135, y, 1143, y); label(beam, v, 1152.500, y + 10.500);
});
line(beam, 1135, 1168.500, 1143, 1168.500); label(beam, '−40', 1152.500, 1179);

/* ---- energy plot ---- */
const en = document.getElementById('energy');
const BLUE = '#1f77b4', RED = '#d62728';
const ex = x => 1230 + x / 2.5705, ey = y => 710 + y / 2.376;
const clip = add(en, 'clipPath', { id: 'eclip' });
add(clip, 'rect', { x: 1355.700, y: 774, width: 343.500, height: 486.500 });
const ed = add(en, 'g', { 'clip-path': 'url(#eclip)' });
function dots(s, c) { pts(s).forEach(([x, y]) => add(ed, 'circle', { cx: ex(x), cy: ey(y), r: 5.300, fill: c })); }
dots('364,367 395,350 425,398 453,455 485,424 512,462 543,407 572,479 603,564 631,602 661,683 690,736 721,664 751,738 780,913 811,1039 838,1127 870,1229 897,1149 929,1163 957,1224 988,1236 1016,1265 1047,1248 1077,1158 1106,1154 1136,1222 1165,1244', BLUE);
dots('379,1030 410,787 438,763 469,1084 497,824 528,1170 559,709 587,640 618,832 646,666 677,770 706,1236 736,692 764,305 795,495 824,640 854,583 883,1270 914,918 944,733 973,925 1003,863 1032,1027 1063,1310 1090,987 1122,706 1150,894', RED);
const gauss = [];
for (let x = 1376; x <= 1679; x += 1) gauss.push([x, 1260 - 422.500 * Math.exp(-((x - 1535.400) ** 2) / (2 * 15.100 ** 2))]);
add(ed, 'polyline', { points: poly(gauss), fill: 'none', stroke: RED, 'stroke-width': 3.600 });
box(en, 1355.700, 774, 1699.200, 1260.500);
add(en, 'path', { d: 'M1535.400 1043l2.200 4.500 5.500-.5-3.500 3 3 5-5-2-2.200 3.500-2.200-3.500-5 2 3-5-3.500-3 5.500.5z', fill: RED, stroke: RED });
[25, 20, 15, 10, 5, 0].forEach((v, i) => { const y = 791 + i * 89.500; line(en, 1347, y, 1355.700, y, BLUE); label(en, v, 1337.500, y + 10.300, { anchor: 'end', fill: BLUE }); });
[100, 80, 60, 40, 20, 0].forEach((v, i) => { const y = 838 + i * 84.500; line(en, 1699.200, y, 1708, y, RED); label(en, v, 1717.500, y + 10.300, { fill: RED }); });
['−10.0', '−7.5', '−5.0', '−2.5'].forEach((s, i) => { const x = 1409.700 + i * 96.400; line(en, x, 1261, x, 1269.500); label(en, s, x, 1299, { anchor: 'middle' }); });
label(en, 'RT_Grid V', 1527.500, 1337, { anchor: 'middle', len: 127 });
label(en, 'RT_Detector pA', 1287.500, 1018.500, { anchor: 'middle', fill: BLUE, len: 201, rot: -90 });
label(en, '-dI/dV (%)', 1793.500, 1019.500, { anchor: 'middle', fill: RED, len: 129, rot: -90 });
label(en, 'RT_Detector from 2023-01-05_09-44_aCarbon_Betagal_depoCryo_25_energy.h5', 1370.500, 792, { size: 8.300, len: 309.500 });
label(en, 'center: -6.7 V', 1336.500, 1042, { fill: RED, len: 177.500 });
label(en, 'FWHM: 0.9 V', 1346, 1072, { fill: RED, len: 168 });

/* ---- deposition plots ---- */
const dp = document.getElementById('depo');
const cur = '335,1270 341,1415 345,1415 349,1200 352,970 358,1128 362,780 366,606 371,708 379,645 386,680 393,608 398,690 402,732 407,680 414,738 425,656 429,802 437,655 443,778 450,672 456,730 463,693 469,803 474,687 478,750 486,738 491,675 497,738 504,635 509,660 513,732 518,700 527,836 536,661 541,888 549,711 558,765 562,835 567,838 572,902 577,820 580,857 588,790 594,725 598,820 607,683 612,850 620,722 625,840 633,784 639,872 645,840 652,778 656,896 661,814 669,907 674,908 678,850 683,907 692,873 697,1013 705,821 709,920 718,856 723,985 731,735 736,825 741,722 746,850 750,865 758,820 768,920 776,866 785,967 790,900 794,1008 799,898 806,1010 812,1405 816,870 821,824 828,888 834,890 843,1025 848,810 857,985 865,927 870,990 874,800 879,777 884,905 892,780 897,910 901,832 905,840 910,957 919,822 928,1045 932,975 937,1085 941,938 945,1425 950,1002 957,1380 963,1410 967,880 972,1048 977,1042 985,780 994,653 1003,735 1012,632 1017,755 1025,669 1030,880 1035,765 1040,920 1044,903 1052,1060 1057,806 1062,893 1066,830 1075,915 1088,1170 1092,1170 1097,1292 1106,900 1110,820 1115,925 1124,792 1128,945 1132,940 1137,857 1142,872 1147,965 1150,913 1158,980 1167,972 1172,1032 1181,943 1186,1000 1195,937 1200,1040 1213,957 1217,967 1221,846 1226,995 1234,928 1240,1020 1252,922 1257,1048 1262,982 1270,1016 1275,873 1279,890 1284,1030 1293,930 1297,1060 1301,1005 1310,1053 1319,951 1324,1042 1333,992 1337,1005 1342,1080 1349,1042';
const chg = '333,1040 345,1035 355,1034 363,1027 390,995 451,915 520,832 560,788 584,764 635,705 670,670 718,630 745,598 770,574 805,547 818,545 835,528 870,499 895,470 925,445 955,426 968,425 985,412 1025,362 1045,342 1080,313 1105,302 1160,254 1190,237 1245,192 1300,150 1349,118';
const pl = { fill: 'none', stroke: BLUE, 'stroke-width': 3.600, 'stroke-linejoin': 'round' };
add(dp, 'polyline', { ...pl, points: poly(scaled(cur, 1830, 2.148, 280, 3)) });
add(dp, 'polyline', { ...pl, points: poly(scaled(chg, 1830, 2.148, 780, 2.613)) });
line(dp, 1963, 698, 2480, 698, RED, 3.800);
line(dp, 1963, 900, 2480, 900, '#00aa00', 3.800);
box(dp, 1963.200, 380, 2480, 768);
box(dp, 1963.200, 808, 2480, 1195.500);
[[60, 429], [40, 537], [20, 644], [0, 752], [15, 900], [10, 993], [5, 1086], [0, 1178]].forEach(([v, y]) => {
  line(dp, 1954, y, 1963, y); line(dp, 2480, y, 2488.500, y);
  label(dp, v, 1945, y + 9.500, { anchor: 'end' }); label(dp, v, 2498.500, y + 9.500);
});
['13:35', '13:40', '13:45', '13:50', '13:55', '14:00', '14:05', '14:10', '14:15'].forEach((s, i) => {
  const x = 1978 + i * 62;
  line(dp, x, 1196, x, 1205);
  label(dp, '20 ' + s, x - 7, 1232.500, { anchor: 'end', rot: -30 });
});
label(dp, 'Time', 2220.500, 1324.500, { anchor: 'middle', len: 64 });
label(dp, 'Current (pA)', 1892.500, 574.500, { anchor: 'middle', len: 158, rot: -90 });
label(dp, 'Charge (pAh)', 1892.500, 1002.500, { anchor: 'middle', len: 170, rot: -90 });
label(dp, 'C_Shuttle from 2023-02-20_10-42_aCarbon_Betagal_depoCryo_10_depo.h5', 1995, 397.700, { size: 12.200, len: 466 });
label(dp, 'start: 13:36 end: 14:14', 1972.500, 832, { size: 19.400, len: 242 });
label(dp, '19.0 pAh deposited within 37 min', 1972.500, 855.500, { size: 19.400, len: 353 });
```
